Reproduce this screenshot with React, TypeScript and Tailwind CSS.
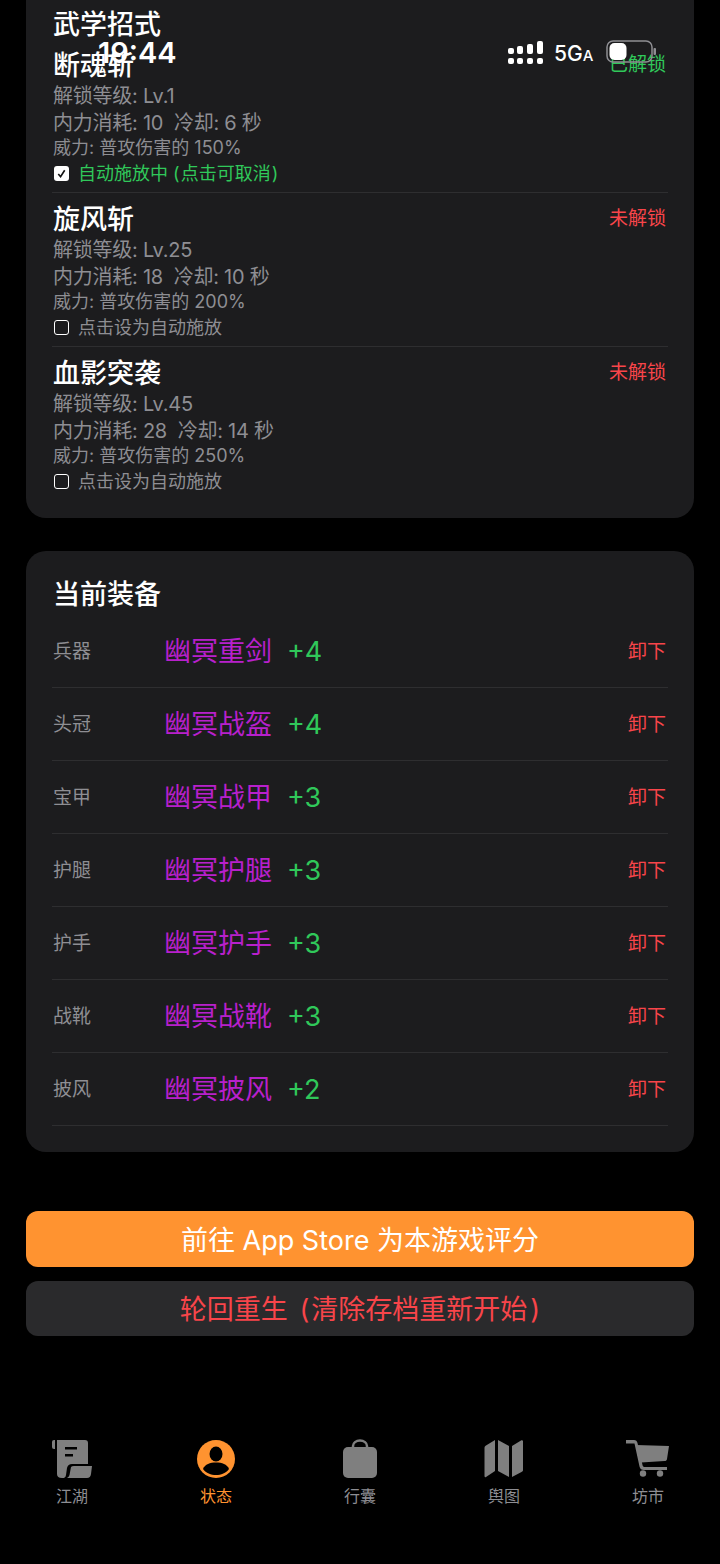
const font = { fontFamily: '"Inter","Noto Sans CJK SC",sans-serif' };

type Skill = { name: string; state: string; lv: string; cost: string; cd: string; pow: string; on?: boolean };
const skills: Skill[] = [
  { name: "断魂斩", state: "已解锁", lv: "1", cost: "10", cd: "6", pow: "150", on: true },
  { name: "旋风斩", state: "未解锁", lv: "25", cost: "18", cd: "10", pow: "200" },
  { name: "血影突袭", state: "未解锁", lv: "45", cost: "28", cd: "14", pow: "250" },
];
const gear = [
  ["兵器", "幽冥重剑", "+4"],
  ["头冠", "幽冥战盔", "+4"],
  ["宝甲", "幽冥战甲", "+3"],
  ["护腿", "幽冥护腿", "+3"],
  ["护手", "幽冥护手", "+3"],
  ["战靴", "幽冥战靴", "+3"],
  ["披风", "幽冥披风", "+2"],
];

function SkillRow({ s, last }: { s: Skill; last: boolean }) {
  return (
    <div className={`h-[154px] pt-[10px] pl-[1px] ${last ? "" : "border-b border-[#2e2e30]"}`}>
      <div className="flex justify-between items-start pr-[2px]">
        <div className="text-[27px] leading-[34px] font-medium text-white">{s.name}</div>
        <div className={`text-[19px] leading-[24px] mt-[4px] ${s.on ? "text-[#30c85a]" : "text-[#f8454a]"}`}>{s.state}</div>
      </div>
      <div className="text-[20px] leading-[26px] tracking-[-0.25px] text-[#8e8e93]">解锁等级: Lv.{s.lv}</div>
      <div className="text-[20px] leading-[28px] tracking-[-0.25px] text-[#8e8e93] whitespace-pre">内力消耗: {s.cost}  冷却: {s.cd} 秒</div>
      <div className="text-[18px] leading-[22px] mb-[2px] text-[#8e8e93]">威力: 普攻伤害的 {s.pow}%</div>
      <div className="flex items-center h-[25px] text-[18px]">
        {s.on ? (
          <span className="w-[15px] h-[15px] ml-[1px] rounded-[3px] bg-white flex items-center justify-center">
            <svg width="11" height="11" viewBox="0 0 12 12"><path d="M2.5 6.5 5 9.5 9.500 2.500" fill="none" stroke="#111" strokeWidth="1.800" /></svg>
          </span>
        ) : (
          <span className="w-[15px] h-[15px] ml-[1px] rounded-[3px] border-[1.5px] border-white" />
        )}
        {s.on ? (
          <span className="ml-[9px] text-[#30c85a]">
            自动施放中 <span className="mr-[1px]">(</span>点击可取消<span className="ml-[1px]">)</span>
          </span>
        ) : (
          <span className="ml-[9px] text-[#8e8e93]">点击设为自动施放</span>
        )}
      </div>
    </div>
  );
}

function GearRow({ g }: { g: string[] }) {
  return (
    <div className="h-[73px] pt-[2px] pl-[1px] flex items-center border-b border-[#2e2e30] pr-[2px]">
      <div className="w-[111px] text-[19px] text-[#8e8e93]">{g[0]}</div>
      <div className="text-[27px] text-[#b820cc]">{g[1]}</div>
      <div className="text-[27px] text-[#30c85a] ml-[15px]">{g[2]}</div>
      <div className="ml-auto text-[19px] text-[#f8454a]">卸下</div>
    </div>
  );
}

const G = "#7f7f7f";
const tabs = [
  {
    label: "江湖",
    icon: (
      <svg width="40" height="38" viewBox="0 0 40 38">
        <path d="M0 2q0-2 2-2h1v9H2q-2 0-2-2z" fill={G} />
        <path d="M5 0H33q3 0 3 3V24H20q-4 0-5 4l-1 7q0 2-2 3H10q-5 0-5-4z" fill={G} />
        <path d="M13 7h12v2.500H13zM13 14h8v2.500H13z" fill="#000" />
        <path d="M19 27q1-1 3-1H40l-1 8q-.5 4-4 4H15q2-1 2.500-3z" fill={G} />
      </svg>
    ),
  },
  {
    label: "状态",
    icon: (
      <svg width="40" height="40" viewBox="0 0 40 40">
        <circle cx="20" cy="20" r="19" fill="#ff9330" />
        <ellipse cx="20" cy="15" rx="6.500" ry="7.500" fill="#000" />
        <path d="M7 30c2-5 7-6.500 13-6.500S31 25 33 30c-3 4-8 6-13 6S10 34 7 30z" fill="#000" />
      </svg>
    ),
  },
  {
    label: "行囊",
    icon: (
      <svg width="36" height="40" viewBox="0 0 36 40">
        <path d="M11 9V7c0-3 3-5.500 7-5.500S25 4 25 7v2" fill="none" stroke={G} strokeWidth="2.500" />
        <rect x="1" y="8" width="34" height="31" rx="5" fill={G} />
      </svg>
    ),
  },
  {
    label: "舆图",
    icon: (
      <svg width="40" height="40" viewBox="0 0 40 40">
        <path d="M11 1v31L2 38c-1 .500-1.500 0-1.500-1V9c0-1 .500-2 1.500-2.500z M14 1l11 6v31l-11-6z M28 7l9-5.500c1-.500 2 0 2 1V31c0 1-.500 1.500-1.500 2L28 38z" fill={G} />
      </svg>
    ),
  },
  {
    label: "坊市",
    icon: (
      <svg width="44" height="38" viewBox="0 0 44 38">
        <path d="M0 0h8c2 0 3 1 3.500 3l5 22c.3 1.500 1 2 2.500 2h22v3H18c-2.500 0-4-1-4.500-3.500L8.500 3.500H0z" fill={G} />
        <path d="M10 5 43 6l-2 13c-.3 1.500-1 2-2.500 2L15 22.500z" fill={G} />
        <circle cx="17" cy="33.500" r="3.200" fill={G} />
        <circle cx="34" cy="33.500" r="3.200" fill={G} />
      </svg>
    ),
  },
];

export default function App() {
  return (
    <div style={font} className="relative w-[720px] h-[1564px] bg-black overflow-hidden">
      <div className="h-[518px] mx-[26px] bg-[#1c1c1e] rounded-b-[20px] px-[26px] pt-[8px]">
        <div className="text-[27px] leading-[34px] pl-[1px] font-medium text-white">武学招式</div>
        <div className="-mt-[3px]">
          {skills.map((s, i) => (
            <SkillRow key={s.name} s={s} last={i === 2} />
          ))}
        </div>
      </div>

      <div className="mt-[33px] h-[601px] mx-[26px] bg-[#1c1c1e] rounded-[20px] px-[26px] pt-[26px]">
        <div className="text-[27px] leading-[36px] pl-[1px] font-medium text-white mb-[2px]">当前装备</div>
        {gear.map((g) => (
          <GearRow key={g[0]} g={g} />
        ))}
      </div>

      <div className="mt-[59px] mx-[26px] h-[56px] pt-[4px] rounded-[12px] bg-[#ff9330] flex items-center justify-center text-[27px] text-white">前往 App Store 为本游戏评分</div>
      <div className="mt-[14px] mx-[26px] h-[55px] pt-[3px] rounded-[12px] bg-[#2a2a2c] flex items-center justify-center text-[27px] text-[#f8454a] whitespace-pre">
        轮回重生 <span className="ml-[4px] mr-[2px]">(</span>清除存档重新开始<span className="ml-[3px]">)</span>
      </div>

      <div className="mt-[101px] grid grid-cols-5 w-[720px]">
        {tabs.map((t) => (
          <div key={t.label} className="flex flex-col items-center">
            <div className="h-[44px] flex items-center justify-center">{t.icon}</div>
            <div className={`mt-[5px] text-[16px] leading-[20px] ${t.label === "状态" ? "text-[#ff9330]" : "text-[#8e8e93]"}`}>{t.label}</div>
          </div>
        ))}
      </div>

      <div className="absolute top-[34px] left-[98px] text-[29px] leading-[38px] font-semibold text-white">19:44</div>
      <div className="absolute top-[40px] left-[507px] flex items-start h-[26px]">
        <svg width="38" height="26" viewBox="0 0 38 26">
          <g fill="#fff">
            <rect x="1" y="8" width="6" height="6" rx="2" />
            <rect x="1" y="18" width="6" height="6" rx="2" />
            <rect x="10" y="6" width="6" height="8" rx="2" />
            <rect x="10" y="18" width="6" height="6" rx="2" />
            <rect x="20" y="4" width="6" height="10" rx="2" />
            <rect x="20" y="18" width="6" height="6" rx="2" />
            <rect x="30" y="1" width="6" height="13" rx="2" />
            <rect x="30" y="18" width="6" height="6" rx="2" />
          </g>
        </svg>
        <span className="ml-[9px] text-[21px] leading-[26px] mt-[1px] font-medium text-white">5G</span>
        <span className="text-[15px] leading-[26px] mt-[3px] font-medium text-white">A</span>
        <svg className="ml-[13px]" width="50" height="24" viewBox="0 0 50 24">
          <rect x="1" y="1" width="45" height="21" rx="6" fill="none" stroke="#8e8e93" strokeWidth="1.500" />
          <rect x="3.500" y="3" width="17" height="17" rx="5" fill="#fff" />
          <rect x="47.500" y="8" width="2.500" height="7" rx="1" fill="#8e8e93" />
        </svg>
      </div>
    </div>
  );
}
